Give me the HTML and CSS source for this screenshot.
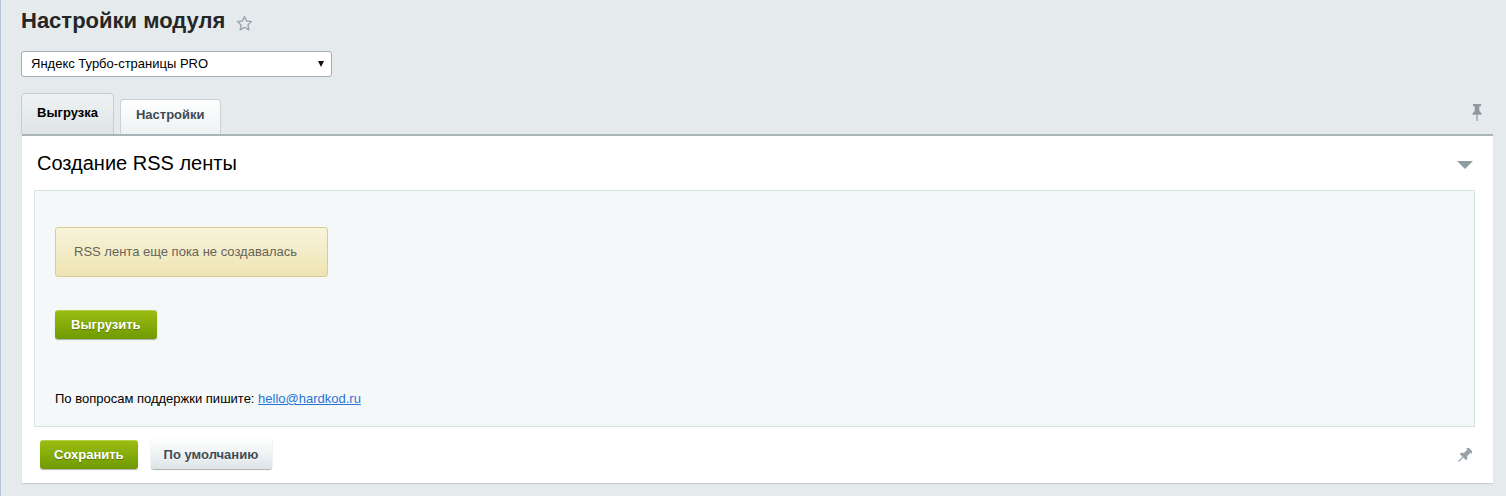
FILE: index.html
```html
<!DOCTYPE html>
<html lang="ru">
<head>
    <meta charset="utf-8">
    <title>Настройки модуля</title>
    <link rel="stylesheet" href="styles.css">
</head>
<body>
    <div class="page">
        <h1 class="page_title">
            Настройки модуля
            <svg class="star" width="17" height="17" viewBox="0 0 17 17">
                <path d="M8.5 1.5l2.1 4.5 4.9.6-3.6 3.4 1 4.9-4.4-2.5-4.4 2.5 1-4.9L1.5 6.6l4.9-.6z" fill="none" stroke="#9aa6ac" stroke-width="1.4" stroke-linejoin="round"/>
            </svg>
        </h1>

        <div class="module_select">
            <span>Яндекс Турбо-страницы PRO</span>
            <i class="select_arrow"></i>
        </div>

        <div class="tabs">
            <div class="tab tab_active">Выгрузка</div>
            <div class="tab">Настройки</div>
            <svg class="tabs_pin" width="10" height="17" viewBox="0 0 10 17">
                <path d="M1 0h8v2.2H7.3v4.6l2.2 2.6v1.4H.5V9.4l2.2-2.6V2.2H1z" fill="#8d999f"/>
                <rect x="4.4" y="10.8" width="1.2" height="6.2" fill="#8d999f"/>
            </svg>
        </div>

        <div class="panel">
            <div class="panel_head">
                <h2>Создание RSS ленты</h2>
                <i class="collapse_arrow"></i>
            </div>

            <div class="panel_body">
                <div class="notice">RSS лента еще пока не создавалась</div>
                <div class="export_row">
                    <button class="btn btn_green btn_export">Выгрузить</button>
                </div>
                <p class="support">По вопросам поддержки пишите: <a href="mailto:hello@hardkod.ru">hello@hardkod.ru</a></p>
            </div>

            <div class="panel_foot">
                <button class="btn btn_green">Сохранить</button>
                <button class="btn btn_gray">По умолчанию</button>
                <svg class="foot_pin" width="16" height="16" viewBox="0 0 16 16">
                    <g transform="translate(8.5 7.5) rotate(45) translate(-5 -8.5)">
                        <path d="M1 0h8v2.2H7.3v4.6l2.2 2.6v1.4H.5V9.4l2.2-2.6V2.2H1z" fill="#97a3a9"/>
                        <rect x="4.4" y="10.8" width="1.2" height="6.2" fill="#97a3a9"/>
                    </g>
                </svg>
            </div>
        </div>
    </div>
</body>
</html>
```

FILE: styles.css
```css
body {
    margin: 0;
    background: #e5ebed;
    font-family: "Liberation Sans", Arial, sans-serif;
    font-size: 13px;
    color: #000;
}

.page {
    min-height: 496px;
    box-sizing: border-box;
    padding: 8px 13px 0 20px;
    border-left: 1px solid #b4c5d3;
}

.page_title {
    margin: 0 0 17px;
    display: flex;
    align-items: center;
    gap: 11px;
    font-size: 22px;
    line-height: 26px;
    font-weight: bold;
    color: #262626;
}

.star {
    margin-top: 4px;
}

.module_select {
    width: 311px;
    height: 26px;
    box-sizing: border-box;
    display: flex;
    align-items: center;
    justify-content: space-between;
    padding: 0 7px 0 9px;
    background: #fff;
    border: 1px solid #a6adb1;
    border-radius: 3px;
    line-height: 24px;
}

.select_arrow {
    width: 0;
    height: 0;
    border-left: 3px solid transparent;
    border-right: 3px solid transparent;
    border-top: 6px solid #111;
}

/* вкладки */
.tabs {
    margin-top: 16px;
    display: flex;
    align-items: flex-end;
    gap: 6px;
}

.tab {
    box-sizing: border-box;
    height: 35px;
    padding: 7px 15px 0;
    border: 1px solid #c9d1d5;
    border-bottom: none;
    border-radius: 4px 4px 0 0;
    background: linear-gradient(#ffffff, #eef2f3);
    font-weight: bold;
    line-height: 16px;
    color: #3f4b54;
}

.tab_active {
    height: 41px;
    padding-top: 11px;
    border-color: #c4cdd1;
    background: linear-gradient(#eef2f3, #dfe5e7);
    color: #000;
}

.tabs_pin {
    margin: 0 11px 13px auto;
}

/* панель */
.panel {
    margin-left: 1px;
    background: #fff;
    border-top: 2px solid #a9b4b9;
    box-shadow: 0 1px 1px rgba(0, 0, 0, 0.12);
}

.panel_head {
    display: flex;
    align-items: center;
    justify-content: space-between;
    padding: 15px 20px 0 15px;
}

.panel_head h2 {
    margin: 0;
    font-size: 20px;
    line-height: 24px;
    font-weight: normal;
}

.collapse_arrow {
    width: 0;
    height: 0;
    margin-top: 3px;
    border-left: 8px solid transparent;
    border-right: 8px solid transparent;
    border-top: 8px solid #8f9ca2;
}

.panel_body {
    margin: 15px 18px 0 12px;
    padding: 36px 20px 19px;
    background: #f5f8f9;
    border: 1px solid #d8e1e4;
}

.notice {
    width: 273px;
    box-sizing: border-box;
    padding: 16px 18px;
    line-height: 16px;
    color: #66645a;
    background: linear-gradient(#f8f4da, #eee4b3);
    border: 1px solid #d9cb95;
    border-radius: 3px;
}

.export_row {
    margin-top: 33px;
}

.support {
    margin: 52px 0 0;
    line-height: 16px;
}

.support a {
    color: #2675d7;
}

.panel_foot {
    display: flex;
    align-items: center;
    gap: 13px;
    padding: 12px 18px 14px;
}

.foot_pin {
    margin: 4px 3px 0 auto;
}

/* кнопки */
.btn {
    height: 29px;
    padding: 0 14px;
    border: none;
    border-radius: 3px;
    font-family: "Liberation Sans", Arial, sans-serif;
    font-size: 13px;
    font-weight: bold;
    line-height: 29px;
    cursor: pointer;
}

.btn_export {
    padding: 0 16px;
}

.btn_green {
    color: #fff;
    background: linear-gradient(#9bbe12, #6f9a03);
    box-shadow: 0 1px 1px rgba(0, 0, 0, 0.3), inset 0 1px 0 rgba(255, 255, 255, 0.25);
    text-shadow: 0 1px 1px rgba(0, 0, 0, 0.3);
}

.btn_gray {
    height: 30px;
    padding: 0 14px 0 13px;
    color: #3f4b54;
    background: linear-gradient(#ffffff, #dde5e8);
    box-shadow: 0 0 1px rgba(0, 0, 0, 0.2), 0 1px 1px rgba(0, 0, 0, 0.3), inset 0 1px 0 #fff;
    text-shadow: 0 1px 0 rgba(255, 255, 255, 0.7);
}
```
